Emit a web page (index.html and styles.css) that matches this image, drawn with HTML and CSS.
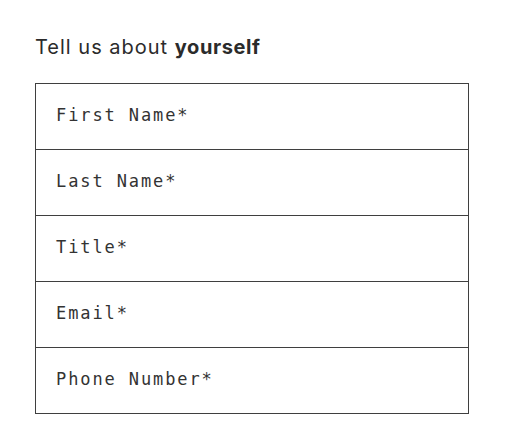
FILE: index.html
```html
<!DOCTYPE html>
<html lang="en">
<head>
  <meta charset="UTF-8" />
  <title>About you</title>
  <link rel="stylesheet" href="styles.css">
</head>
<body>
  <section class="about">
    <h2>Tell us about <strong>yourself</strong></h2>
    <form class="fields">
      <label class="field">First Name*</label>
      <label class="field">Last Name*</label>
      <label class="field">Title*</label>
      <label class="field">Email*</label>
      <label class="field">Phone Number*</label>
    </form>
  </section>
</body>
</html>
```
FILE: styles.css
```css
* {
  margin: 0;
  padding: 0;
  box-sizing: border-box;
}

body {
  background: #fff;
  color: #2b2b2b;
}

.about {
  padding: 35px 0 0 35px;
}

.about h2 {
  font-family: Inter, "Noto Sans", sans-serif;
  font-weight: 400;
  font-size: 20px;
  letter-spacing: 1px;
  line-height: 24px;
  margin-bottom: 24px;
}

.about h2 strong {
  font-weight: 700;
  letter-spacing: 0.6px;
}

.fields {
  width: 434px;
  border: 1px solid #3f3f3f;
  display: flex;
  flex-direction: column;
}

.field {
  height: 66px;
  border-top: 1px solid #3f3f3f;
  padding: 20px 0 0 20px;
  font-family: "DejaVu Sans Mono", monospace;
  font-size: 17px;
  letter-spacing: 1.9px;
  line-height: 22px;
  color: #333;
}

.field:first-child {
  border-top: none;
  height: 65px;
}
```
